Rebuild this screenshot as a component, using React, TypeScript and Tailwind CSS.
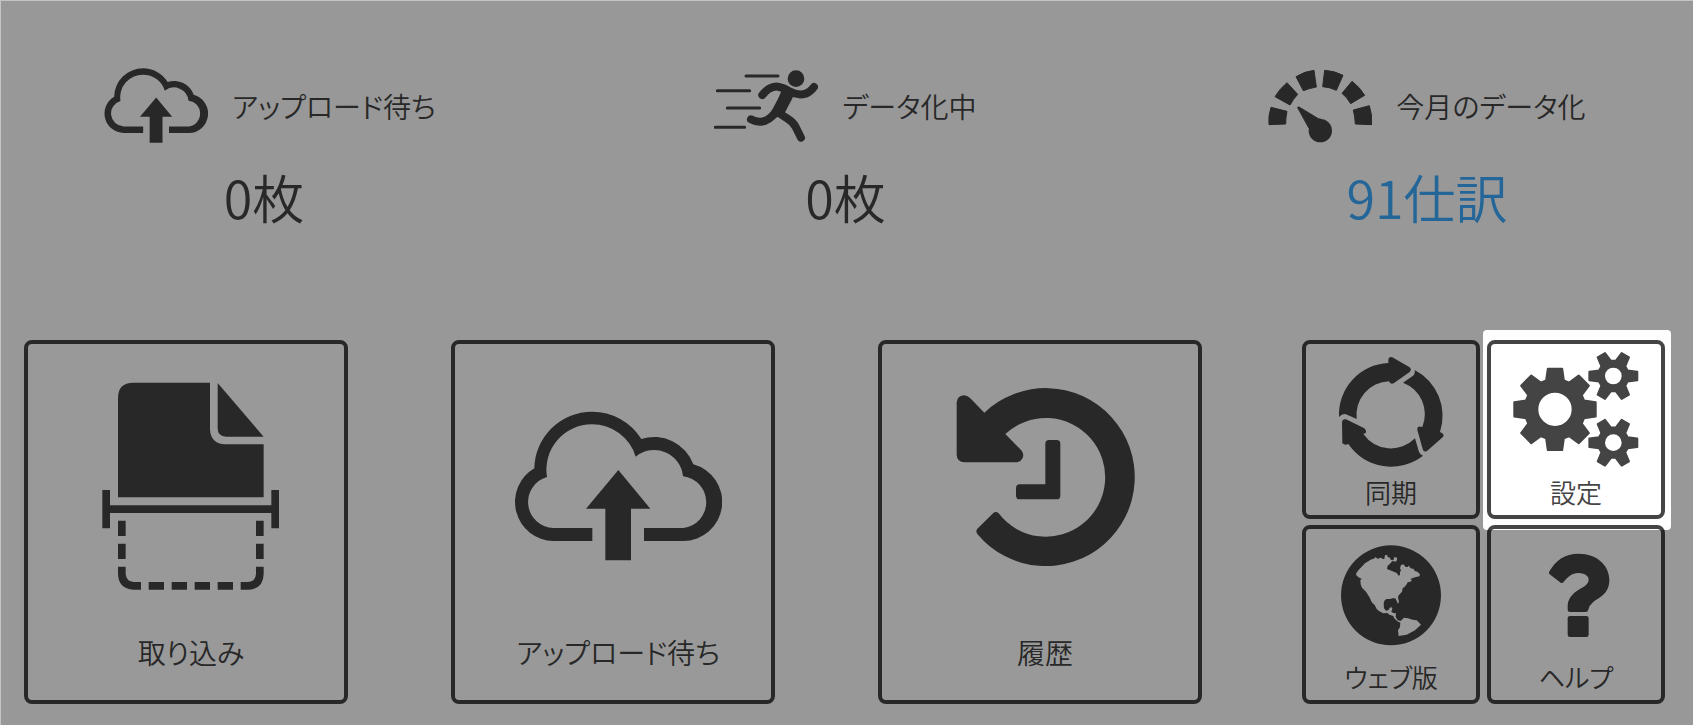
import type { ReactNode } from "react";

type IconProps = { className?: string };

function Svg({ viewBox, className, children }: { viewBox: string; className?: string; children: ReactNode }) {
  return (
    <svg viewBox={viewBox} className={className} fill="currentColor" aria-hidden="true">
      {children}
    </svg>
  );
}

function CloudUploadIcon({ className }: IconProps) {
  return (
    <Svg viewBox="252 274 624 450" className={className}>
      <path d="M487 664H370A117 117 0 0 1 313 446A173 173 0 0 1 486 276A173 173 0 0 1 634 358A125 125 0 0 1 790 434A117 117 0 0 1 760 664H642V625H760A78 78 0 0 0 759 470A87 87 0 0 0 617 411A136 136 0 0 0 486 314A136 136 0 0 0 351 472A78 78 0 0 0 370 625H487Z" />
      <path d="M565 451L661 567H603V722H526V567H468Z" />
    </Svg>
  );
}

function RunnerIcon({ className }: IconProps) {
  return (
    <Svg viewBox="72 81 312 225" className={className}>
      <circle cx="318" cy="113" r="25" />
      <g fill="none" stroke="currentColor" strokeLinecap="round" strokeLinejoin="round">
        <g strokeWidth="9">
          <path d="M168 105H264M82 149H179M112 201H209M76 259H164" />
        </g>
        <g strokeWidth="24">
          <path d="M217 162Q238 135 264 137Q280 139 298 151Q323 165 347 158Q362 152 372 138" />
          <path d="M183 235Q197 243 213 242Q237 240 256 214" />
          <path d="M262 213L296 235Q310 244 317 258L333 290" />
        </g>
      </g>
      <path d="M274 150Q270 160 264 173L242 215L253 233L284 216L308 170L310 158Z" />
    </Svg>
  );
}

function GaugeIcon({ className }: IconProps) {
  return (
    <Svg viewBox="84 81 312 225" className={className}>
      <g stroke="currentColor" strokeWidth="3" strokeLinejoin="round">
        <path d="M93 199L141 211Q137 230 137 249L87 251Q84 225 93 199Z" />
        <path d="M141 125L173 160Q160 174 150 192L105 167Q119 143 141 125Z" />
        <path d="M168 107Q194 91 222 88L229 138Q208 142 190 149Z" />
        <path d="M254 88Q284 90 309 103L289 148Q268 138 248 137Z" />
        <path d="M336 121Q360 139 374 163L332 188Q322 170 306 157Z" />
        <path d="M388 194Q397 223 396 251L346 249Q345 227 340 207Z" />
        <path d="M173 200Q173 197 177 198L235 233Q255 234 250 260L207 262Z" />
      </g>
      <circle cx="241" cy="269" r="35" />
    </Svg>
  );
}

function ScanIcon({ className }: IconProps) {
  return (
    <Svg viewBox="261 186 624 624" className={className}>
      <path d="M354 532V234Q354 188 400 188H630V328Q632 372 676 373H791V532Z" />
      <path d="M653 189L791 350H678Q653 350 653 325Z" />
      <path d="M307 510H330V556H814V510H837V625H814V579H330V625H307Z" />
      <path d="M354 602H377V648H354ZM354 671H377V717H354ZM768 602H791V648H768ZM768 671H791V717H768Z" />
      <path d="M446 786H492V809H446ZM515 786H561V809H515ZM584 786H630V809H584ZM653 786H699V809H653Z" />
      <path d="M354 740H377V762Q379 785 401 786H423V809H400Q355 806 354 762Z" />
      <path d="M791 740H768V762Q766 785 745 786H722V809H746Q790 806 791 762Z" />
    </Svg>
  );
}

function HistoryIcon({ className }: IconProps) {
  return (
    <Svg viewBox="243 186 624 624" className={className}>
      <path d="M373 278A267 267 0 1 1 352 642Q346 634 352 626L400 579Q408 572 416 580A178 178 0 1 0 436 342L484 391Q492 402 489 411Q484 426 470 427H313Q291 426 290 404V247Q292 228 311 226Q322 226 331 235Z" />
      <path d="M567 360H590Q601 360 601 371V527Q601 538 590 538H479Q468 538 468 527V504Q468 493 479 493H556V371Q556 360 567 360Z" />
    </Svg>
  );
}

function SyncIcon({ className }: IconProps) {
  return (
    <Svg viewBox="-21 -6 378 348" className={className}>
      <path d="M12 189A155 155 0 0 1 160 27V16Q162 7 172 10L224 40Q231 46 224 54L176 88Q165 92 162 82A101 101 0 0 0 65 195L33 181Q22 178 12 189Z" />
      <path d="M204 86L233 66Q241 60 239 48A155 155 0 0 1 315 234L322 238Q329 245 323 250L276 291Q266 296 263 285L247 228Q246 216 257 218L262 219A101 101 0 0 0 204 86Z" />
      <path d="M240 253L252 294Q256 303 264 305A155 155 0 0 1 40 270Q30 275 22 268L21 203Q23 194 33 196L88 223Q96 231 92 237L85 240A101 101 0 0 0 240 253Z" />
    </Svg>
  );
}

type GearSpec = {
  cx: number;
  cy: number;
  outer: number;
  body: number;
  hole: number;
  teeth: number;
  tipAngle: number;
  baseAngle: number;
};

function gearPath({ cx, cy, outer, body, hole, teeth, tipAngle, baseAngle }: GearSpec) {
  const at = (radius: number, degrees: number) => {
    const a = (degrees * Math.PI) / 180;
    return `${(cx + radius * Math.cos(a)).toFixed(1)} ${(cy + radius * Math.sin(a)).toFixed(1)}`;
  };
  const points: string[] = [];
  for (let i = 0; i < teeth; i++) {
    const mid = (360 / teeth) * i;
    points.push(at(body, mid - baseAngle), at(outer, mid - tipAngle), at(outer, mid + tipAngle), at(body, mid + baseAngle));
  }
  return `M${points.join("L")}ZM${cx - hole} ${cy}a${hole} ${hole} 0 1 0 ${hole * 2} 0a${hole} ${hole} 0 1 0 ${-hole * 2} 0Z`;
}

const gears: GearSpec[] = [
  { cx: 256, cy: 268, outer: 124, body: 91, hole: 53, teeth: 8, tipAngle: 10, baseAngle: 17 },
  { cx: 431, cy: 168, outer: 73, body: 46, hole: 28, teeth: 6, tipAngle: 10, baseAngle: 21 },
  { cx: 431, cy: 368, outer: 73, body: 46, hole: 28, teeth: 6, tipAngle: 10, baseAngle: 21 },
];

function GearsIcon({ className }: IconProps) {
  return (
    <Svg viewBox="130 96 378 348" className={className}>
      <g fillRule="evenodd" stroke="currentColor" strokeWidth="6" strokeLinejoin="round">
        {gears.map((gear) => (
          <path key={`${gear.cx}-${gear.cy}`} d={gearPath(gear)} />
        ))}
      </g>
    </Svg>
  );
}

function GlobeIcon({ className }: IconProps) {
  return (
    <Svg viewBox="-36 -24 378 348" className={className}>
      <path
        fillRule="evenodd"
        d="M3 151a150 150 0 1 0 300 0a150 150 0 1 0 -300 0Z
        M48 86L55 76L75 55L92 44L104 40L106 36L114 42L118 39L124 38L128 42L133 42L135 30L142 31L143 36L150 38L152 44L160 46L163 36L171 38L171 46L166 50L157 48L150 56L143 62L141 72L150 76L165 82L170 84L176 92L180 90L180 82L183 76L180 70L183 60L190 58L197 66L203 66L206 62L212 70L221 72L224 78L232 80L240 88L238 94L225 97L216 100L210 103L216 104L213 109L208 112L204 110L200 118L194 125L188 130L186 140L175 152L174 158L177 170L174 176L170 168L166 160L158 160L150 162L140 162L134 166L131 175L132 190L138 197L146 195L149 188L156 187L157 192L154 200L160 204L168 205L167 216L173 226L182 228L192 218L204 220L218 224L230 226L236 232L243 239L225 256L200 269L176 273L174 256L180 246L181 233L172 229L162 219L160 213L148 209L142 204L130 205L118 199L110 192L104 180L95 172L88 156L78 140L66 128L62 118L61 105L66 102L58 98L50 92Z"
      />
      <path d="M82 152L88 158L98 178L94 177L88 168Z" />
    </Svg>
  );
}

function QuestionIcon({ className }: IconProps) {
  return (
    <Svg viewBox="130 66 378 348" className={className}>
      <path d="M238 171C258 136 284 116 328 116C380 116 418 150 419 193C420 240 385 248 370 262Q358 272 356 284Q354 291 348 291H301Q294 291 294 284V272C295 245 318 228 340 217Q357 207 357 193C356 180 340 174 325 174C308 175 298 182 281 202Q278 206 273 203L240 178Q237 175 238 171Z" />
      <rect x="294" y="303" width="63" height="63" rx="7" />
    </Svg>
  );
}

function Stat({ icon, label, value, accent }: { icon: ReactNode; label: string; value: string; accent?: boolean }) {
  return (
    <div className="w-80">
      <dt className="flex items-center justify-center-safe gap-6 text-[28px] leading-10 whitespace-nowrap">
        <span className="shrink-0">{icon}</span>
        {label}
      </dt>
      <dd className={`mt-5 text-center text-[52px] leading-[68px] ${accent ? "text-[#3faaff]" : ""}`}>{value}</dd>
    </div>
  );
}

function LargeTile({ icon, label }: { icon: ReactNode; label: string }) {
  return (
    <button
      type="button"
      className="flex h-[364px] flex-col items-center rounded-lg border-4 border-[#444] bg-white pt-[38px] pl-[10px] text-[28px] leading-10"
    >
      {icon}
      <span className="mt-[42px]">{label}</span>
    </button>
  );
}

function SmallTile({ icon, label }: { icon: ReactNode; label: string }) {
  return (
    <button
      type="button"
      className="flex h-[179px] w-full flex-col items-center rounded-lg border-4 border-[#444] bg-white pt-2 text-[26px] leading-8"
    >
      {icon}
      <span className="mt-2">{label}</span>
    </button>
  );
}

const statIcon = "h-[75px] w-[104px]";
const largeIcon = "size-[208px]";
const smallIcon = "h-[116px] w-[126px]";

export default function App() {
  return (
    <main className="min-h-screen border-t border-l border-[#c4c4c4] bg-[#fdfdfd] text-[#444] [font-family:'Noto_Sans_CJK_JP',sans-serif] [font-feature-settings:'palt'] [font-weight:350]">
      <div className="min-h-[calc(100vh-1px)] overflow-hidden pt-[67px] pb-5">
        <dl className="flex justify-between pr-[106px] pl-[103px]">
          <Stat icon={<CloudUploadIcon className={statIcon} />} label="アップロード待ち" value="0枚" />
          <Stat icon={<RunnerIcon className={statIcon} />} label="データ化中" value="0枚" />
          <Stat icon={<GaugeIcon className={statIcon} />} label="今月のデータ化" value="91仕訳" accent />
        </dl>

        <nav className="mt-[109px] grid grid-cols-[1178fr_363fr] gap-[100px] pr-7 pl-[23px]">
          <div className="grid grid-cols-3 gap-[103px]">
            <LargeTile icon={<ScanIcon className={largeIcon} />} label="取り込み" />
            <LargeTile icon={<CloudUploadIcon className={largeIcon} />} label="アップロード待ち" />
            <LargeTile icon={<HistoryIcon className={largeIcon} />} label="履歴" />
          </div>
          <div className="grid grid-cols-2 gap-x-[7px] gap-y-[6px]">
            <SmallTile icon={<SyncIcon className={smallIcon} />} label="同期" />
            <div className="relative">
              <SmallTile icon={<GearsIcon className={smallIcon} />} label="設定" />
              <div className="pointer-events-none absolute -top-[10px] -right-[6px] -bottom-[11px] -left-1 z-10 rounded shadow-[0_0_0_2000px_rgba(0,0,0,0.4)]" />
            </div>
            <SmallTile icon={<GlobeIcon className={smallIcon} />} label="ウェブ版" />
            <SmallTile icon={<QuestionIcon className={smallIcon} />} label="ヘルプ" />
          </div>
        </nav>
      </div>
    </main>
  );
}
